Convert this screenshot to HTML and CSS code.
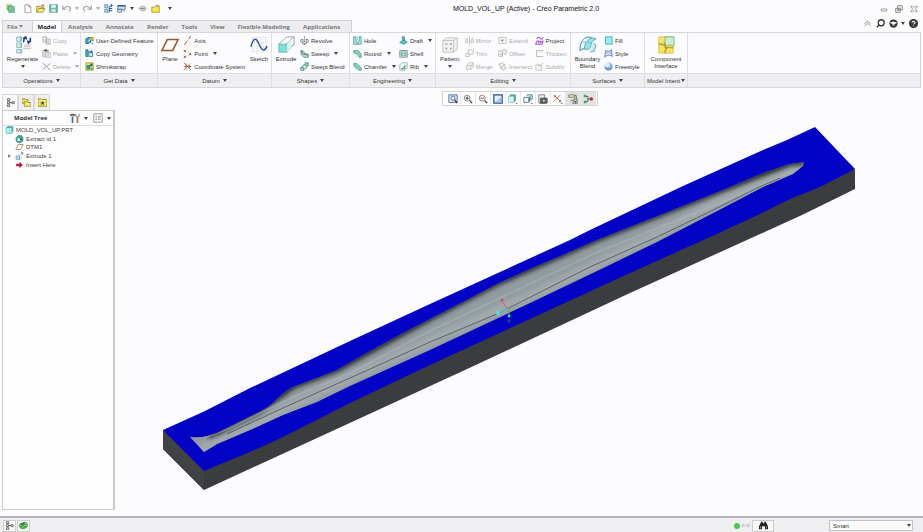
FILE: index.html
```html
<!DOCTYPE html>
<html lang="en">
<head>
<meta charset="utf-8">
<title>MOLD_VOL_UP (Active) - Creo Parametric 2.0</title>
<link rel="stylesheet" href="styles.css">
</head>
<body>
<svg class="sprite" aria-hidden="true">
  <symbol id="app" viewBox="0 0 12 12"><path d="M0 0h8v8H0z" fill="#c3e276"/><path d="M3 3h9v9H3z" fill="#7cc49b"/><path d="M2 2h7v7H2z" fill="#5c9ccd"/><path d="M4 4h4v4H4z" fill="#8bd04e"/></symbol>
  <symbol id="new" viewBox="0 0 12 12"><path d="M2.500 1h5l3 3v7.500h-8zM7.500 1v3h3" fill="#fff" stroke="#888"/></symbol>
  <symbol id="open" viewBox="0 0 12 12"><path d="M1 11V3h4l1 1h4v3" fill="#f4df62" stroke="#8b7a22"/><path d="M1 11l3-5h8l-3 5z" fill="#fbef86" stroke="#8b7a22"/><path d="M7 2q3-2 4 1" fill="none" stroke="#333"/></symbol>
  <symbol id="save" viewBox="0 0 12 12"><path d="M1 1h10v10H1z" fill="#66c7bf" stroke="#3b7f85"/><path d="M3 1h6v4H3z" fill="#eef"/><path d="M3 7h6v4H3z" fill="#d6e4c7"/></symbol>
  <symbol id="undo" viewBox="0 0 12 12"><path d="M2 6q5-5 9-1 1 3-2 5M1 2v5h5" fill="none" stroke="#a2a2a2" stroke-width="1.500"/></symbol>
  <symbol id="redo" viewBox="0 0 12 12"><path d="M10 6q-5-5-9-1-1 3 2 5M11 2v5H6" fill="none" stroke="#a2a2a2" stroke-width="1.500"/></symbol>
  <symbol id="regen-s" viewBox="0 0 12 12"><path d="M1 1h4v4H1zM1 7h4v4H1z" fill="#bdeaea" stroke="#3c7c9c"/><path d="M7 11V5q0-3 4-3M9 0l2 2-2 2M7 9h4M7 6h4" fill="none" stroke="#1d4f9c" stroke-width="1.300"/></symbol>
  <symbol id="windows" viewBox="0 0 12 12"><path d="M1 2h10v5H1zM1 7h5v4H1z" fill="#dce8f5" stroke="#4a6c96"/><path d="M1 1.500h10v2H1z" fill="#33598b"/><path d="M7 9h4" stroke="#777"/></symbol>
  <symbol id="closewin" viewBox="0 0 12 12"><path d="M1 6l3-3h5l2 3-2 3H4z" fill="#ccc" stroke="#aaa"/><path d="M3 6h6" stroke="#777"/></symbol>
  <symbol id="folder" viewBox="0 0 12 12"><path d="M1 4h5l1-1h4v8H1z" fill="#fae94d" stroke="#9a8b1d"/><path d="M6 3l2-2 3 2" fill="none" stroke="#777"/></symbol>
  <symbol id="copy" viewBox="0 0 12 12"><path d="M1 1h5v7H1zM5 4h6v7H5z" fill="#eee" stroke="#aaa"/><path d="M6.500 7h3M6.500 9h3" stroke="#aaa"/></symbol>
  <symbol id="paste" viewBox="0 0 12 12"><path d="M1 2h8v8H1z" fill="#ddd" stroke="#aaa"/><path d="M5 5h6v6H5z" fill="#fff" stroke="#aaa"/><path d="M3 1h4v2H3zM6.500 7h3M6.500 9h3" stroke="#aaa"/></symbol>
  <symbol id="delete" viewBox="0 0 12 12"><path d="M1 1l10 10M11 2L1 10" fill="none" stroke="#999" stroke-width="1.300"/></symbol>
  <symbol id="udf" viewBox="0 0 12 12"><path d="M1 4l3-2h4v6l-3 2H1z" fill="#38a8c4" stroke="#23618f"/><path d="M6 2h5v5z" fill="#f6ca3c" stroke="#b07d1d"/><path d="M4 7l4-3" stroke="#fff"/><path d="M9 9h2v2H9z" fill="#4477a8"/></symbol>
  <symbol id="copygeo" viewBox="0 0 12 12"><path d="M1 1h3v9H1z" fill="#43b8b4" stroke="#237e86"/><path d="M5 4h5v6H5z" fill="#bfe9ee" stroke="#2f6d9b"/><path d="M4 2l3 3M9 1v4l-2-2" stroke="#1d3d88" fill="none"/></symbol>
  <symbol id="shrink" viewBox="0 0 12 12"><path d="M1 1h10v10H1z" fill="#efe35c" stroke="#a49b37"/><path d="M2 4h5v6H2z" fill="#2a9a8b"/><path d="M7 2h3v4H7z" fill="#2e6390"/><path d="M8 8h2v2H8z" fill="#2b8145"/></symbol>
  <symbol id="axis" viewBox="0 0 12 12"><path d="M2 12l3-5M6 6l1-1M8 4l2-4" stroke="#9a5a2c" stroke-width="1.300"/></symbol>
  <symbol id="point" viewBox="0 0 12 12"><path d="M1 1l3 3m0-3L1 4M8 5l3 3m0-3L8 8M1 9l3 3m0-3l-3 3" stroke="#a25a34" stroke-width="1.300"/><path d="M5 3l3 1M3 5v2M6 9l3-1" stroke="#ccc"/></symbol>
  <symbol id="csys" viewBox="0 0 12 12"><path d="M1 1l9 9M1 11l8-9M1 6h9M4 2v8" stroke="#a25a34" fill="none"/><path d="M8 4l3 2-3 2" fill="#555"/></symbol>
  <symbol id="revolve" viewBox="0 0 12 12"><path d="M6 0v12" stroke="#666" stroke-dasharray="2 1"/><path d="M4 4L1 5v3l3 1zM8 4l3 1v3L8 9z" fill="#d6f3f2" stroke="#5c7c80"/><path d="M3 10q3 2 6 0" fill="none" stroke="#555"/></symbol>
  <symbol id="sweep" viewBox="0 0 12 12"><path d="M1 2l4 1 1 3 5 1v4H5L2 8z" fill="#a8ebdf" stroke="#557d78"/><path d="M1 2l3 5 7 1" fill="none" stroke="#555"/></symbol>
  <symbol id="blend" viewBox="0 0 12 12"><path d="M1 7h4v4H1zM7 1h4v4H7z" fill="#8ce3d5" stroke="#427d75"/><path d="M3 7q0-3 4-4M5 10q4-1 5-5" fill="#a8ebdf" stroke="#427d75"/></symbol>
  <symbol id="hole" viewBox="0 0 12 12"><path d="M1 1h3v6l2 3 2-3V1h3v10H1z" fill="#a1e9e6" stroke="#4695a3"/><path d="M6 0v11" stroke="#8aa" stroke-dasharray="1 1"/></symbol>
  <symbol id="round" viewBox="0 0 12 12"><path d="M1 2h4q6 1 6 9H8Q8 6 1 5z" fill="#78d7bd" stroke="#51917e"/><path d="M1 7h4v4" fill="none" stroke="#bbb"/></symbol>
  <symbol id="chamfer" viewBox="0 0 12 12"><path d="M1 2h4l6 6v3H8L1 5z" fill="#78d7bd" stroke="#51917e"/><path d="M1 7h3v4" fill="none" stroke="#bbb"/></symbol>
  <symbol id="draft" viewBox="0 0 12 12"><path d="M1 9l4-4 6 3-4 3zM4 1h3l1 5-3-1z" fill="#59c8b8" stroke="#3786a0"/></symbol>
  <symbol id="shell" viewBox="0 0 12 12"><path d="M1 2h10v9H1z" fill="#d6f3ee" stroke="#6b7b7b"/><path d="M3 4h6v5H3zM4 9V6h4v3" fill="#fff" stroke="#5c8f87"/></symbol>
  <symbol id="rib" viewBox="0 0 12 12"><path d="M1 11V4l3-3h7v7l-3 3z" fill="#eff9f6" stroke="#8aa"/><path d="M3 9q5 0 5-5v5z" fill="#65cdbb" stroke="#438a7d"/></symbol>
  <symbol id="mirror" viewBox="0 0 12 12"><path d="M6 0v12M1 3l3 2v4H1zM11 3L8 5v4h3z" fill="#eee" stroke="#bbb"/></symbol>
  <symbol id="trim" viewBox="0 0 12 12"><path d="M4 1h7v6H4zM1 6h5v4H1z" fill="#f5f5f5" stroke="#bbb"/></symbol>
  <symbol id="merge" viewBox="0 0 12 12"><path d="M5 1h6v6L8 10H2V5z" fill="#f0f0f0" stroke="#bbb"/><path d="M2 5h6v5M8 5l3-4" fill="none" stroke="#bbb"/></symbol>
  <symbol id="extend" viewBox="0 0 12 12"><path d="M1 2h10v8H1z" fill="#f5f5f5" stroke="#bbb"/><path d="M3 6l4-2v4z" fill="#999"/></symbol>
  <symbol id="offset" viewBox="0 0 12 12"><path d="M1 2h5v8H1zM6 1h5v6H8" fill="#eee" stroke="#b5b5b5"/><path d="M3 8l4-3" stroke="#999"/></symbol>
  <symbol id="intersect" viewBox="0 0 12 12"><path d="M1 3l5-2 5 7-5 3zM3 9l7-7" fill="#eee" stroke="#b0b0b0"/></symbol>
  <symbol id="project" viewBox="0 0 12 12"><path d="M2 4q3-4 5-1t4-1M1 11q1-6 5-4t5-1l-2 5z" fill="none" stroke="#a94bd1" stroke-width="1.400"/><path d="M4 9h4" stroke="#7445b8"/></symbol>
  <symbol id="thicken" viewBox="0 0 12 12"><path d="M11 2H2v8h9" fill="none" stroke="#aaa"/><path d="M4 4h6" stroke="#ddd"/></symbol>
  <symbol id="solidify" viewBox="0 0 12 12"><path d="M1 4h8v7H1zM3 2l3 4 5-5" fill="#f5f5f5" stroke="#bbb"/></symbol>
  <symbol id="fill" viewBox="0 0 12 12"><path d="M2 1h9v10H2z" fill="#8ff0f0" stroke="#459eab"/></symbol>
  <symbol id="style" viewBox="0 0 12 12"><path d="M1 11l1-9q4 3 8-1l1 9q-5-4-10 1z" fill="#b4cbed" stroke="#5876aa"/><path d="M3 8q3-3 6-1" fill="none" stroke="#fff"/></symbol>
  <symbol id="freestyle" viewBox="0 0 12 12"><circle cx="6" cy="6" r="5.500" fill="#82b0e8"/><ellipse cx="4.500" cy="4" rx="3.500" ry="3" fill="#e2eefc"/><path d="M1 8q5 4 10 0" fill="none" stroke="#446fb5"/></symbol>

  <symbol id="regen" viewBox="0 0 20 20"><path d="M3 1h5v5H3zM3 8h5v5H3zM3 15h5v4H3z" fill="#c6f1ee" stroke="#9ab0b0"/><path d="M7 1h1v5M7 8h1v5M7 15h1v4" stroke="#4cb5af" fill="none"/><path d="M11 7q-1-4 2-5M10 3l3-2 1 3M18 2q1 4-2 5M19 5l-3 3-1-3" fill="none" stroke="#213f97" stroke-width="1.700"/><path d="M11 10h8M10 14h9" stroke="#bbb"/><path d="M11 12h7" stroke="#dcaaa5"/></symbol>
  <symbol id="plane" viewBox="0 0 20 20"><path d="M7 4h12l-6 12H1z" fill="#fffdfa" stroke="#95592c" stroke-width="1.700"/></symbol>
  <symbol id="sketch" viewBox="0 0 20 20"><path d="M2 2h17M2 7h17M2 12h17M2 17h17M3 1v18M8 1v18M13 1v18M18 1v18" stroke="#c4c8d0" stroke-dasharray="1 1.500"/><path d="M1 12Q5-3 10 9t9 2" fill="none" stroke="#2b4e9b" stroke-width="1.500"/></symbol>
  <symbol id="extrude" viewBox="0 0 20 20"><path d="M2 9L11 1h8v8l-8 9" fill="#fff" stroke="#939e9e"/><path d="M10 9l9-8M10 18l9-9" stroke="#939e9e"/><path d="M2 9h9v9H2z" fill="#79e3d8" stroke="#6db6b0"/><path d="M11 9l5-5v9l-5 5z" fill="#d2f4ee"/></symbol>
  <symbol id="pattern" viewBox="0 0 20 20"><path d="M2 5l4-3h12v13l-4 3H2z" fill="#f0f0f0" stroke="#c2c2c2"/><path d="M2 5h12v13M14 5l4-3" fill="none" stroke="#c2c2c2"/><path d="M5 8h2v2H5zM10 8h2v2h-2zM5 13h2v2H5zM10 13h2v2h-2z" fill="#aaa"/></symbol>
  <symbol id="boundary" viewBox="0 0 20 20"><path d="M1 16Q1 3 10 1l9 2q-6 3-6 9-2 4-5 3-3-2-7 1z" fill="#8cebea" stroke="#5b9da8"/><path d="M1 16Q1 3 10 1l4 1Q6 6 6 14q-3 0-5 2z" fill="#e9fafa" stroke="#5b9da8"/><path d="M4 7q6-1 10 1M16 8l3 2-2 7-5 1" fill="#b5edf0" stroke="#7aa7b0"/></symbol>
  <symbol id="component" viewBox="0 0 20 20"><path d="M2 1h16v18H2z" fill="#fae45a" stroke="#d6bc62"/><path d="M9 1h10v10h-3q-1-3-3 0H9V8q-3-1 0-3z" fill="#c9eed0" stroke="#7fa983"/><path d="M2 9h4q1 3 3 0v4q3 1 0 3v3M9 13h9" fill="none" stroke="#ad8a2a" stroke-width="1.200"/></symbol>

  <symbol id="refit" viewBox="0 0 12 12"><path d="M1 1h10v9H1z" fill="#e6eefc" stroke="#355c98"/><circle cx="6" cy="5" r="2.500" fill="#fff" stroke="#355c98"/><path d="M8 7l3 4" stroke="#333" stroke-width="1.500"/></symbol>
  <symbol id="zoomin" viewBox="0 0 12 12"><circle cx="5" cy="5" r="3.500" fill="#f8f8f8" stroke="#777"/><path d="M8 8l3 3" stroke="#333" stroke-width="1.500"/><path d="M3 5h4M5 3v4" stroke="#333"/></symbol>
  <symbol id="zoomout" viewBox="0 0 12 12"><circle cx="5" cy="5" r="3.500" fill="#f8f8f8" stroke="#777"/><path d="M8 8l3 3" stroke="#333" stroke-width="1.500"/><path d="M3 5h4" stroke="#833"/></symbol>
  <symbol id="repaint" viewBox="0 0 12 12"><path d="M1 1h10v10H1z" fill="#e3effd" stroke="#254f8f" stroke-width="1.500"/><path d="M3 10l7-7v7z" fill="#a5c5ea"/></symbol>
  <symbol id="cube" viewBox="0 0 12 12"><path d="M1 3l2-2h6v7l-2 2H1z" fill="#49a69d" stroke="#6aa9a5"/><path d="M1 3h6v7H1z" fill="#d2f5f1"/><path d="M9 11h3l-1.500 1z" fill="#222"/></symbol>
  <symbol id="views" viewBox="0 0 12 12"><path d="M4 2l1-1h6v5l-2 1" fill="#d6efee" stroke="#487274"/><path d="M1 4h6v6H1z" fill="#f6fbfb" stroke="#487274"/><path d="M7 4l2-2v6l-2 2z" fill="#4d8381"/><path d="M9 11h3l-1.500 1z" fill="#222"/></symbol>
  <symbol id="camera" viewBox="0 0 12 12"><path d="M1 1h7v10H1z" fill="#eee" stroke="#777"/><path d="M3 5h8v6H3z" fill="#777" stroke="#444"/><circle cx="7" cy="8" r="2" fill="#ddd" stroke="#222"/></symbol>
  <symbol id="datums" viewBox="0 0 12 12"><path d="M1 1l9 9M1 9l8-8M1 4l3-2M7 10l3-3" stroke="#875442" fill="none"/><path d="M9 11h3l-1.500 1z" fill="#222"/></symbol>
  <symbol id="annot" viewBox="0 0 12 12"><path d="M1 1h7v3H1z" fill="#ebe5a5" stroke="#777"/><path d="M8 2h2v4M7 6h4v3H7zM3 8h3M9 9v2M5 11h7" fill="none" stroke="#555"/></symbol>
  <symbol id="spin" viewBox="0 0 12 12"><path d="M2 3h4v6H2M5 6h5" fill="none" stroke="#555"/><path d="M1 1h3v3H1zM1 8h3v3H1z" fill="#28a77c"/><path d="M5 5h2v2H5z" fill="#28a77c"/><circle cx="10" cy="6" r="2" fill="#c4203f"/></symbol>
  <symbol id="tree" viewBox="0 0 12 12"><path d="M2 1h3v2.500H2zM2 5h3v2.500H2zM2 9h3v2.500H2zM8 5h3v2.500H8z" fill="#fff" stroke="#444"/><path d="M5 6h3" stroke="#444"/></symbol>
  <symbol id="folders" viewBox="0 0 12 12"><path d="M0 1h4l1 1h3v5H0z" fill="#eee464" stroke="#8c8122"/><path d="M3 5h4l1 1h4v5H3z" fill="#f4ec7a" stroke="#8c8122"/></symbol>
  <symbol id="favs" viewBox="0 0 12 12"><path d="M0 1h4l1 1h7v9H0z" fill="#f1e75e" stroke="#8c8122"/><path d="M6 4l.7 1.600H9L7.300 7.200 8 9.500 6 8 4 9.500l.7-2.300L3 5.600h2.300z" fill="#444"/></symbol>
  <symbol id="tools" viewBox="0 0 12 12"><path d="M3 4v8" stroke="#2f71a5" stroke-width="2"/><path d="M0 3q3-2 6 0" fill="none" stroke="#555" stroke-width="2"/><path d="M9 5v7" stroke="#b17044" stroke-width="2"/><path d="M7 1v3q2 2 4 0V1" fill="none" stroke="#666"/></symbol>
  <symbol id="list" viewBox="0 0 12 12"><path d="M1 1h10v10H1z" fill="#fff" stroke="#888"/><path d="M3 4h2M6 4h3M3 6h2M6 6h3M3 8h2M6 8h3" stroke="#888"/></symbol>
  <symbol id="part" viewBox="0 0 12 12"><path d="M1 3l2-2h8v7l-2 3H1z" fill="#4bb9b4" stroke="#3a8f8e"/><path d="M1 3h8v8H1z" fill="#a8f1ea"/></symbol>
  <symbol id="extract" viewBox="0 0 12 12"><path d="M1 4l3-3h5l2 3v5l-3 2H3L1 9z" fill="#3da79a" stroke="#256e69"/><path d="M3 5h4v4H3z" fill="#e8ffff"/><path d="M6 7l3-3v4z" fill="#1a5958"/></symbol>
  <symbol id="extrude-s" viewBox="0 0 12 12"><path d="M1 6h5v5H1zM6 6l4-4M6 11l3-3" fill="#c6eff3" stroke="#4b7fa0"/><path d="M8 1h3v3" fill="none" stroke="#355c80"/></symbol>
  <symbol id="insert" viewBox="0 0 12 12"><path d="M1 4h5V1l5 5-5 5V8H1z" fill="#c91432"/></symbol>
  <symbol id="globe" viewBox="0 0 12 12"><ellipse cx="6" cy="6" rx="6" ry="4.500" fill="#43a34b" transform="rotate(-20 6 6)"/><path d="M1 7q4-5 9-4M3 10q3-5 8-4" fill="none" stroke="#d0d85e"/><path d="M3 5l4-2" stroke="#245c94" stroke-width="1.500"/></symbol>
  <symbol id="binoc" viewBox="0 0 12 12"><path d="M3 1h2v2h2V1h2l3 6v4H8V7H4v4H0V7z" fill="#222"/><path d="M2 7v3M10 7v3" stroke="#bbb"/></symbol>
  <symbol id="min" viewBox="0 0 12 12"><path d="M2 6h8v3H2z" fill="#fff" stroke="#777"/></symbol>
  <symbol id="restore" viewBox="0 0 12 12"><path d="M4 1h7v6H4zM1 5h7v6H1z" fill="#eee" stroke="#666"/><path d="M3 8h3" stroke="#666"/></symbol>
  <symbol id="close" viewBox="0 0 12 12"><path d="M1 2h3l2 2 2-2h3L8 6l3 4H8L6 8l-2 2H1l3-4z" fill="#fff" stroke="#777"/></symbol>
  <symbol id="collapse" viewBox="0 0 12 12"><path d="M2 6l4-3 4 3M2 9l4-3 4 3" fill="none" stroke="#888" stroke-width="1.200"/></symbol>
  <symbol id="search" viewBox="0 0 12 12"><circle cx="7" cy="5" r="4" fill="#fff" stroke="#333" stroke-width="1.700"/><path d="M4 8l-3 3" stroke="#333" stroke-width="2"/></symbol>
  <symbol id="learn" viewBox="0 0 12 12"><circle cx="6" cy="6" r="5.500" fill="#333"/><path d="M2 5l4-1 4 1-4 2zM4 8h4" fill="#fff" stroke="#fff"/></symbol>
  <symbol id="help" viewBox="0 0 12 12"><circle cx="6" cy="6" r="6" fill="#333"/><path d="M4 5q0-2 2-2t2 2q0 1-2 2M6 8.500v1" fill="none" stroke="#fff" stroke-width="1.400"/></symbol>
</svg>

<header class="titlebar">
  <div class="quick">
    <button aria-label="Creo"><svg><use href="#app"/></svg></button><i class="sep"></i>
    <button aria-label="New"><svg><use href="#new"/></svg></button>
    <button aria-label="Open"><svg><use href="#open"/></svg></button>
    <button aria-label="Save"><svg><use href="#save"/></svg></button>
    <button aria-label="Undo" class="menu dim"><svg><use href="#undo"/></svg></button>
    <button aria-label="Redo" class="menu dim"><svg><use href="#redo"/></svg></button>
    <button aria-label="Regenerate"><svg><use href="#regen-s"/></svg></button>
    <button aria-label="Windows" class="menu"><svg><use href="#windows"/></svg></button>
    <button aria-label="Close window"><svg><use href="#closewin"/></svg></button>
    <button aria-label="Working directory"><svg><use href="#folder"/></svg></button><i class="sep"></i>
    <button aria-label="Customize" class="menu more"></button>
  </div>
  <h1>MOLD_VOL_UP (Active) - Creo Parametric 2.0</h1>
  <div class="window">
    <button aria-label="Minimize"><svg><use href="#min"/></svg></button>
    <button aria-label="Restore"><svg><use href="#restore"/></svg></button>
    <button aria-label="Close"><svg><use href="#close"/></svg></button>
  </div>
</header>

<div class="tabbar">
  <nav class="tabs">
    <button class="file menu">File</button><button class="active">Model</button><button>Analysis</button><button>Annotate</button><button>Render</button><button>Tools</button><button>View</button><button>Flexible Modeling</button><button>Applications</button>
  </nav>
  <div class="helpers">
    <button aria-label="Collapse ribbon"><svg><use href="#collapse"/></svg></button>
    <button aria-label="Search"><svg><use href="#search"/></svg></button>
    <button aria-label="Learning" class="menu"><svg><use href="#learn"/></svg></button>
    <button aria-label="Help"><svg><use href="#help"/></svg></button>
  </div>
</div>

<div class="ribbon">
  <section class="group operations">
    <div class="tools">
      <button class="big menu"><svg><use href="#regen"/></svg><span>Regenerate</span></button>
      <div class="stack">
        <button disabled><svg><use href="#copy"/></svg>Copy</button>
        <button disabled class="menu"><svg><use href="#paste"/></svg>Paste</button>
        <button disabled class="menu"><svg><use href="#delete"/></svg>Delete</button>
      </div>
    </div>
    <button class="label menu">Operations</button>
  </section>
  <section class="group getdata">
    <div class="tools">
      <div class="stack">
        <button><svg><use href="#udf"/></svg>User-Defined Feature</button>
        <button><svg><use href="#copygeo"/></svg>Copy Geometry</button>
        <button><svg><use href="#shrink"/></svg>Shrinkwrap</button>
      </div>
    </div>
    <button class="label menu">Get Data</button>
  </section>
  <section class="group datum">
    <div class="tools">
      <button class="big"><svg><use href="#plane"/></svg><span>Plane</span></button>
      <div class="stack">
        <button><svg><use href="#axis"/></svg>Axis</button>
        <button class="menu"><svg><use href="#point"/></svg>Point</button>
        <button><svg><use href="#csys"/></svg>Coordinate System</button>
      </div>
      <button class="big"><svg><use href="#sketch"/></svg><span>Sketch</span></button>
    </div>
    <button class="label menu">Datum</button>
  </section>
  <section class="group shapes">
    <div class="tools">
      <button class="big"><svg><use href="#extrude"/></svg><span>Extrude</span></button>
      <div class="stack">
        <button><svg><use href="#revolve"/></svg>Revolve</button>
        <button class="menu"><svg><use href="#sweep"/></svg>Sweep</button>
        <button><svg><use href="#blend"/></svg>Swept Blend</button>
      </div>
    </div>
    <button class="label menu">Shapes</button>
  </section>
  <section class="group engineering">
    <div class="tools">
      <div class="stack">
        <button><svg><use href="#hole"/></svg>Hole</button>
        <button class="menu"><svg><use href="#round"/></svg>Round</button>
        <button class="menu"><svg><use href="#chamfer"/></svg>Chamfer</button>
      </div>
      <div class="stack">
        <button class="menu"><svg><use href="#draft"/></svg>Draft</button>
        <button><svg><use href="#shell"/></svg>Shell</button>
        <button class="menu"><svg><use href="#rib"/></svg>Rib</button>
      </div>
    </div>
    <button class="label menu">Engineering</button>
  </section>
  <section class="group editing">
    <div class="tools">
      <button class="big menu"><svg><use href="#pattern"/></svg><span>Pattern</span></button>
      <div class="stack">
        <button disabled><svg><use href="#mirror"/></svg>Mirror</button>
        <button disabled><svg><use href="#trim"/></svg>Trim</button>
        <button disabled><svg><use href="#merge"/></svg>Merge</button>
      </div>
      <div class="stack">
        <button disabled><svg><use href="#extend"/></svg>Extend</button>
        <button disabled><svg><use href="#offset"/></svg>Offset</button>
        <button disabled><svg><use href="#intersect"/></svg>Intersect</button>
      </div>
      <div class="stack">
        <button><svg><use href="#project"/></svg>Project</button>
        <button disabled><svg><use href="#thicken"/></svg>Thicken</button>
        <button disabled><svg><use href="#solidify"/></svg>Solidify</button>
      </div>
    </div>
    <button class="label menu">Editing</button>
  </section>
  <section class="group surfaces">
    <div class="tools">
      <button class="big"><svg><use href="#boundary"/></svg><span>Boundary<br>Blend</span></button>
      <div class="stack">
        <button><svg><use href="#fill"/></svg>Fill</button>
        <button><svg><use href="#style"/></svg>Style</button>
        <button><svg><use href="#freestyle"/></svg>Freestyle</button>
      </div>
    </div>
    <button class="label menu">Surfaces</button>
  </section>
  <section class="group intent">
    <div class="tools">
      <button class="big"><svg><use href="#component"/></svg><span>Component<br>Interface</span></button>
    </div>
    <button class="label menu">Model Intent</button>
  </section>
  <section class="group rest"><div class="tools"></div><div class="label"></div></section>
</div>

<main>
  <aside>
    <nav class="panel-tabs">
      <button class="active" aria-label="Model Tree"><svg><use href="#tree"/></svg></button><button aria-label="Folders"><svg><use href="#folders"/></svg></button><button aria-label="Favorites"><svg><use href="#favs"/></svg></button>
    </nav>
    <div class="panel">
      <div class="panel-head">
        <h2>Model Tree</h2>
        <button class="menu" aria-label="Settings"><svg><use href="#tools"/></svg></button>
        <button class="menu" aria-label="Show"><svg><use href="#list"/></svg></button>
      </div>
      <ul>
        <li class="root"><svg><use href="#part"/></svg>MOLD_VOL_UP.PRT</li>
        <li><svg><use href="#extract"/></svg>Extract id 1</li>
        <li><svg><use href="#plane"/></svg>DTM1</li>
        <li class="closed"><svg><use href="#extrude-s"/></svg>Extrude 1</li>
        <li><svg><use href="#insert"/></svg>Insert Here</li>
      </ul>
    </div>
  </aside>
  <div class="viewport">
    <svg class="model" viewBox="116 88 807 428" role="img" aria-label="Mold volume">
      <defs>
        <clipPath id="pocket"><path d="M190 437Q200 438 207 436L217 433 233 425 257 413Q270 407 277 399 285 391 293 387L317 378 337 370Q385 342 430 319L463 302 497 284 530 269 563 255 597 240 630 227 663 214 723 190 763 173 790 164 804 162 803 166 793 174 763 187 723 208 657 242 630 255 597 271 530 303 430 350 350 386 317 402 283 415 250 430 217 444 204 452z"/></clipPath>
        <filter id="soft" x="-5%" y="-5%" width="110%" height="110%"><feGaussianBlur stdDeviation="2"/></filter>
      </defs>
      <path d="M163 430L204 460 430 350 630 250 855 169V189L802 215 630 293 465 370 204 490 163 449z" fill="#3a3c3e"/>
      <path d="M163 430V449L204 490V471z" fill="#404244"/>
      <path d="M163 430L205 411 250 388 280 374 350 341 430 304 500 272 570 240 590 230 683 186 723 168 763 150 787 140 815 127 855 169 820 187 790 199 760 214 710 237 630 273 580 296 430 365 350 403 283 437 250 452 228 461 204 471z" fill="#0303c6"/>
      <g clip-path="url(#pocket)">
        <path d="M180 150H810V460H180z" fill="#929ba0"/>
        <path d="M200 450L317 393 430 341 530 296 630 248 723 200 795 168" fill="none" stroke="#a0a9ac" stroke-width="10" filter="url(#soft)"/>
        <path d="M207 435L217 431 257 411 293 385 337 368 430 317 497 282 597 238 723 188 790 162 805 160" fill="none" stroke="#292d2e" stroke-width="8" filter="url(#soft)"/>
        <path d="M204 438L230 428 293 397 350 373 430 331 500 298 600 251 720 203 800 168" fill="none" stroke="#adb5b7" stroke-width="2" opacity=".5"/>
        <path d="M227 434L283 408 350 378 430 342 497 314 590 267 657 237 707 213 757 188 780 178" fill="none" stroke="#4b5254" stroke-width=".8"/>
      </g>
      <path d="M502 301l5 7" stroke="#d55c70"/><circle cx="502" cy="300" r="1.500" fill="#cf5363"/>
      <path d="M500 312l8-3" stroke="#63bfe4"/><circle cx="498" cy="313" r="2" fill="#46e8e6"/>
      <path d="M509 307v9" stroke="#6aa53c"/><circle cx="509" cy="316" r="1.500" fill="#39d4a6"/><circle cx="509" cy="321" r="2" fill="#25346a"/>
    </svg>
    <div class="viewbar">
      <button aria-label="Refit"><svg><use href="#refit"/></svg></button><button aria-label="Zoom In"><svg><use href="#zoomin"/></svg></button><button aria-label="Zoom Out"><svg><use href="#zoomout"/></svg></button><button aria-label="Repaint"><svg><use href="#repaint"/></svg></button><button aria-label="Display Style"><svg><use href="#cube"/></svg></button><button aria-label="Saved Orientations"><svg><use href="#views"/></svg></button><button aria-label="View Manager"><svg><use href="#camera"/></svg></button><button aria-label="Datum Display"><svg><use href="#datums"/></svg></button><button aria-label="Annotation Display" aria-pressed="true"><svg><use href="#annot"/></svg></button><button aria-label="Spin Center" aria-pressed="true"><svg><use href="#spin"/></svg></button>
    </div>
  </div>
</main>

<footer>
  <div class="toggles">
    <button aria-label="Toggle tree"><svg><use href="#tree"/></svg></button>
    <button aria-label="Toggle browser"><svg><use href="#globe"/></svg></button>
  </div>
  <div class="status"><i class="on"></i><i></i><i></i></div>
  <button class="find" aria-label="Find"><svg><use href="#binoc"/></svg></button>
  <div class="filter"><select aria-label="Selection filter"><option>Smart</option></select></div>
</footer>
</body>
</html>
```
FILE: styles.css
```css
* { box-sizing: border-box; }
html, body { height: 100%; margin: 0; }
body {
  display: flex;
  flex-direction: column;
  background: #fcfcfe;
  color: #333;
  font: 6px/8px "Liberation Sans", Arial, sans-serif;
  overflow: hidden;
}
button {
  margin: 0;
  padding: 0;
  border: 0;
  background: none;
  color: inherit;
  font: inherit;
  display: flex;
  align-items: center;
  white-space: nowrap;
}
svg { width: 9px; height: 9px; flex: none; display: block; }
.sprite { position: absolute; width: 0; height: 0; }
h1, h2 { margin: 0; }
button:disabled { color: #aaa; }

/* Drop-down arrow */
.menu::after {
  content: "";
  flex: none;
  margin-left: 4px;
  border: 2px solid transparent;
  border-top: 3px solid #444;
  border-bottom: 0;
}
.menu:disabled::after, .dim::after { border-top-color: #aaa; }

/* Title bar */
.titlebar { display: flex; align-items: center; height: 17px; flex: none; }
.quick { display: flex; align-items: center; gap: 4px; width: 172px; padding-left: 6px; }
.quick .sep { width: 1px; height: 9px; background: #ddd; }
.quick .more::after { margin-left: 0; }
.titlebar h1 { flex: 1; text-align: center; font-size: 7px; font-weight: normal; color: #111; }
.window { display: flex; gap: 7px; width: 43px; }
.window svg { width: 8px; height: 8px; }

/* Ribbon tabs */
.tabbar { display: flex; justify-content: space-between; height: 15px; flex: none; align-items: flex-end; padding: 0 5px 0 2px; }
.tabs { display: flex; height: 12px; background: #ededef; border: 1px solid #d0d0d2; border-bottom: 0; padding-right: 4px; font: bold 6px/8px "Open Sans", "Liberation Sans", sans-serif; color: #77777b; }
.tabs button { padding: 0 7px 0 6px; }
.tabs .file { padding: 0 9px 0 4px; }
.tabs .file::after { margin-left: 1px; border-top-color: #888; }
.tabs .active { background: #fcfcfe; color: #222; border: solid #d0d0d2; border-width: 0 1px; padding: 0 5px; }
.helpers { display: flex; align-items: center; gap: 4px; height: 17px; }
.helpers .menu::after { margin-left: 3px; }

/* Ribbon */
.ribbon { display: flex; flex: none; height: 56px; margin: 0 2px; border: 1px solid #d6d6d8; }
.group { display: flex; flex-direction: column; border-right: 1px solid #dedee0; flex: none; }
.group.rest { flex: 1; border-right: 0; }
.tools { display: flex; flex: 1; padding-top: 1px; }
.label { height: 14px; width: 100%; justify-content: center; background: #efeff1; border-top: 1px solid #dedee0; }
.label::after { margin-left: 3px; }
.stack { display: flex; flex-direction: column; align-items: flex-start; }
.stack button { height: 13px; gap: 2px; }
.stack .menu::after { margin-left: 3px; }
.big { flex-direction: column; padding-top: 2px; text-align: center; }
.big svg { width: 18px; height: 18px; margin-bottom: 1px; }
.big span { padding-top: 1px; line-height: 7px; }
.big.menu::after { margin: 2px 0 0; }

.operations { width: 78px; }
.operations .big { width: 39px; }
.getdata { width: 77px; }
.getdata .tools { padding-left: 4px; }
.datum { width: 114px; }
.datum .tools { justify-content: space-between; padding: 1px 3px 0 3px; }
.shapes { width: 78px; }
.shapes .big { width: 28px; }
.engineering { width: 86px; }
.engineering .stack { width: 47px; padding-left: 3px; }
.editing { width: 135px; }
.editing .big { width: 28px; }
.editing .stack { width: 34px; padding-left: 1px; }
.editing .stack + .stack { width: 37px; }
.surfaces { width: 74px; }
.surfaces .big { width: 33px; }
.intent { width: 43px; }
.intent .big { width: 100%; }
.intent .label::after { margin-left: 1px; }

/* Work area */
main { display: flex; flex: 1; min-height: 0; }
aside { display: flex; flex-direction: column; width: 116px; padding: 6px 1px 6px 2px; }
.panel-tabs { display: flex; height: 16px; flex: none; }
.panel-tabs button { width: 16px; justify-content: center; background: #efeff0; border: 1px solid #d8d8da; border-bottom: 0; }
.panel-tabs .active { background: #fcfcfe; }
.panel { flex: 1; border: 1px solid #ccc; border-right: 2px solid #c8c8ca; background: #fdfdfe; }
.panel-head { display: flex; align-items: center; height: 15px; padding: 0 2px 0 11px; border-bottom: 1px solid #ddd; gap: 5px; }
.panel-head h2 { flex: 1; font: bold 6px/8px "Open Sans", "Liberation Sans", sans-serif; color: #333; }
.panel-head svg { width: 10px; height: 10px; }
.panel ul { display: grid; height: 43px; margin: 0; padding: 0; list-style: none; color: #444; }
.panel li { display: flex; align-items: center; gap: 2px; padding-left: 12px; }
.panel li.root { padding-left: 2px; }
.panel li.closed { padding-left: 5px; }
.closed::before { content: ""; border: 2px solid transparent; border-left: 3px solid #888; border-right: 0; margin-right: 2px; }
.panel li svg { width: 9px; height: 8px; }
.viewport { position: relative; flex: 1; min-width: 0; }
.model { width: 100%; height: 100%; }
.viewbar { position: absolute; top: 3px; left: 50%; transform: translateX(-50%); display: flex; padding: 0 1px 0 3px; border: 1px solid #d4d4d6; background: #fdfdfe; }
.viewbar button { width: 15px; height: 13px; justify-content: center; border-right: 1px solid #e6e6e8; }
.viewbar button:last-child { border-right: 0; }
.viewbar [aria-pressed="true"] { background: #e2e2e0; }
.viewbar svg { width: 10px; height: 10px; }

/* Status bar */
footer { display: flex; align-items: center; flex: none; height: 16px; border-top: 2px solid #b4b4b6; background: #efeff1; padding: 1px 10px 0 3px; }
.toggles { display: flex; gap: 1px; flex: 1; }
.toggles button { width: 13px; height: 12px; justify-content: center; border: 1px solid #ccc; background: #fafafa; }
.status { display: flex; align-items: center; gap: 1px; }
.status i { width: 4px; height: 3px; background: #ccced6; border-radius: 2px; }
.status .on { width: 6px; height: 6px; background: #4cc552; border-radius: 3px; }
.find { width: 22px; height: 12px; margin: 0 55px 0 2px; justify-content: center; border: 1px solid #ccc; background: #f8f8f8; }
.filter { position: relative; width: 84px; height: 11px; }
.filter select { appearance: none; width: 100%; height: 100%; padding: 0 3px; border: 1px solid #c4c4c8; border-radius: 0; background: #fafafa; color: #333; font: inherit; display: block; }
.filter::after { content: ""; position: absolute; right: 2px; top: 4px; border: 2px solid transparent; border-top: 3px solid #444; border-bottom: 0; }
```
